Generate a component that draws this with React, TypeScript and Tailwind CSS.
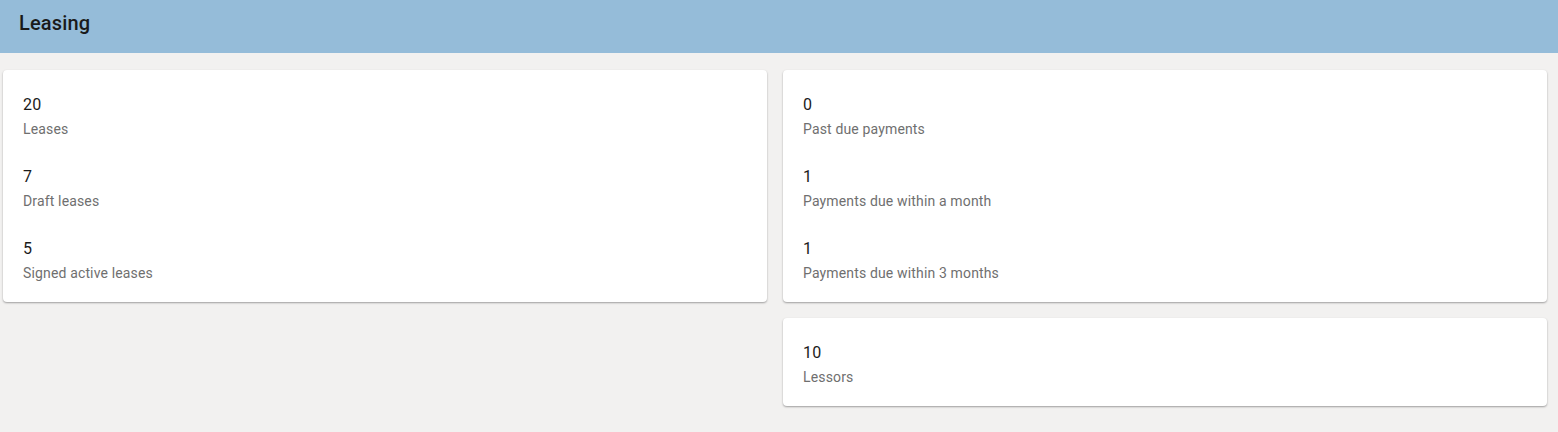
const leasing = [
  { value: "20", label: "Leases" },
  { value: "7", label: "Draft leases" },
  { value: "5", label: "Signed active leases" },
]

const payments = [
  { value: "0", label: "Past due payments" },
  { value: "1", label: "Payments due within a month" },
  { value: "1", label: "Payments due within 3 months" },
]

const lessors = [{ value: "10", label: "Lessors" }]

function StatCard({ items }: { items: { value: string; label: string }[] }) {
  return (
    <div className="bg-white rounded shadow-[0_1px_2px_rgba(0,0,0,0.35)] px-5 pt-[23px] pb-[19px] flex flex-col gap-[26px]">
      {items.map((item, i) => (
        <div key={i} className="flex flex-col">
          <span className="text-base leading-6 tracking-[0.00938em] text-[#1b1b1b]">{item.value}</span>
          <span className="text-sm leading-5 mt-[2px] tracking-[0.01071em] text-[#6f6f6f]">{item.label}</span>
        </div>
      ))}
    </div>
  )
}

export default function App() {
  return (
    <div
      className="min-h-[432px] bg-[#f2f1f0]"
      style={{ fontFamily: "Roboto, 'Noto Sans', sans-serif" }}
    >
      <div className="h-[53px] bg-[#95bcd9] px-[19px] pt-[9px]">
        <h1 className="text-xl leading-7 font-medium tracking-[0.0075em] text-[#1a1a1a]">Leasing</h1>
      </div>
      <div className="grid grid-cols-2 gap-4 pl-[3px] pr-[11px] pt-[17px]">
        <div className="flex flex-col gap-4">
          <StatCard items={leasing} />
        </div>
        <div className="flex flex-col gap-4">
          <StatCard items={payments} />
          <StatCard items={lessors} />
        </div>
      </div>
    </div>
  )
}
